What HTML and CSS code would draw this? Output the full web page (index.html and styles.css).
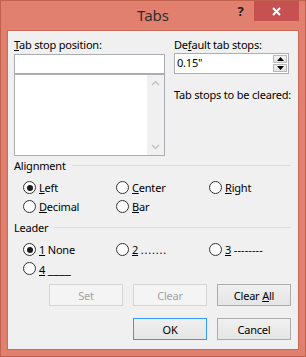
FILE: index.html
```html
<!DOCTYPE html>
<html lang="en">
<head>
    <meta charset="UTF-8">
    <title>Tabs</title>
    <link rel="stylesheet" href="styles.css">
</head>
<body>

<div class="window">
    <div class="titlebar">
        <span></span>
        <span class="title">Tabs</span>
        <div class="controls">
            <span class="help">?</span>
            <span class="close">
                <svg width="9" height="9" viewBox="0 0 9 9"><path d="M1 1L8 8M8 1L1 8" stroke="#fff" stroke-width="2" fill="none"/></svg>
            </span>
        </div>
    </div>

    <div class="client">
        <div class="top">
            <div class="col">
                <label class="lbl"><u>T</u>ab stop position:</label>
                <div class="textbox"></div>
                <div class="listbox">
                    <div class="list"></div>
                    <div class="vscroll">
                        <svg width="17" height="17" viewBox="0 0 17 17"><path d="M5 10L8.5 6.5L12 10" stroke="#c2c2c2" stroke-width="1.5" fill="none"/></svg>
                        <svg width="17" height="17" viewBox="0 0 17 17"><path d="M5 7L8.5 10.5L12 7" stroke="#c2c2c2" stroke-width="1.5" fill="none"/></svg>
                    </div>
                </div>
            </div>
            <div class="col">
                <label class="lbl">De<u>f</u>ault tab stops:</label>
                <div class="spin">
                    <span class="spin-val">0.15"</span>
                    <div class="spin-btns">
                        <span class="spin-btn"><svg width="7" height="4" viewBox="0 0 7 4"><path d="M0 4L3.5 0L7 4Z" fill="#000"/></svg></span>
                        <span class="spin-btn"><svg width="7" height="4" viewBox="0 0 7 4"><path d="M0 0L3.5 4L7 0Z" fill="#000"/></svg></span>
                    </div>
                </div>
                <div class="lbl cleared">Tab stops to be cleared:</div>
            </div>
        </div>

        <div class="group">
            <span>Alignment</span>
            <span class="rule"></span>
        </div>
        <div class="radios">
            <div class="radio checked"><span class="dot"></span><span><u>L</u>eft</span></div>
            <div class="radio"><span class="dot"></span><span><u>C</u>enter</span></div>
            <div class="radio"><span class="dot"></span><span><u>R</u>ight</span></div>
            <div class="radio"><span class="dot"></span><span><u>D</u>ecimal</span></div>
            <div class="radio"><span class="dot"></span><span><u>B</u>ar</span></div>
        </div>

        <div class="group leader">
            <span>Leader</span>
            <span class="rule"></span>
        </div>
        <div class="radios">
            <div class="radio checked"><span class="dot"></span><span><u>1</u> None</span></div>
            <div class="radio"><span class="dot"></span><span><u>2</u> <span class="dots">.......</span></span></div>
            <div class="radio"><span class="dot"></span><span><u>3</u> <span class="dashes">--------</span></span></div>
            <div class="radio"><span class="dot"></span><span><u>4</u> <span class="line">____</span></span></div>
        </div>

        <div class="buttons">
            <button class="btn" disabled>Set</button>
            <button class="btn" disabled>Clear</button>
            <button class="btn">Clear <u>A</u>ll</button>
        </div>
        <div class="buttons last">
            <button class="btn default">OK</button>
            <button class="btn">Cancel</button>
        </div>
    </div>
</div>

</body>
</html>
```

FILE: styles.css
```css
* {
    box-sizing: border-box;
}
body {
    margin: 0;
    font-family: "Noto Sans", sans-serif;
    font-size: 11px;
    letter-spacing: -0.2px;
    color: #000;
}
.window {
    width: 306px;
    height: 357px;
    background: #e2806f;
    border: 1px solid #c1624f;
    padding: 0 6px 6px;
    display: flex;
    flex-direction: column;
}
.titlebar {
    height: 29px;
    display: grid;
    grid-template-columns: 1fr auto 1fr;
}
.title {
    font-size: 15px;
    letter-spacing: 0;
    color: #2e2e2e;
    line-height: 20px;
    padding-top: 4px;
}
.controls {
    justify-self: end;
    display: flex;
    align-items: flex-start;
}
.help {
    width: 27px;
    height: 20px;
    text-align: center;
    font-weight: bold;
    font-size: 13px;
    line-height: 20px;
    color: #222;
}
.close {
    width: 45px;
    height: 20px;
    background: #c75050;
    display: flex;
    align-items: center;
    justify-content: center;
}
.client {
    flex: 1;
    background: #f0f0f0;
    border: 1px solid #c96b5a;
    padding: 6px 7px 0 6px;
}
.top {
    display: grid;
    grid-template-columns: 151px 115px;
    column-gap: 9px;
}
.lbl {
    display: block;
    line-height: 15px;
    height: 16px;
    white-space: nowrap;
}
.textbox {
    height: 20px;
    margin-top: 1px;
    background: #fff;
    border: 1px solid #abadb3;
}
.listbox {
    height: 82px;
    background: #fff;
    border: 1px solid #abadb3;
    display: flex;
}
.list {
    flex: 1;
}
.vscroll {
    width: 17px;
    background: #f0f0f0;
    display: flex;
    flex-direction: column;
    justify-content: space-between;
}
.spin {
    height: 21px;
    background: #fff;
    border: 1px solid #abadb3;
    display: flex;
    justify-content: space-between;
}
.spin-val {
    padding-left: 2px;
    line-height: 18px;
}
.spin-btns {
    width: 15px;
    display: flex;
    flex-direction: column;
    gap: 1px;
    padding: 1px 1px 1px 0;
}
.spin-btn {
    flex: 1;
    background: linear-gradient(#f2f2f2, #e2e2e2);
    border: 1px solid #b9b9b9;
    display: flex;
    align-items: center;
    justify-content: center;
}
.cleared {
    margin-top: 13px;
}
.group {
    display: flex;
    align-items: center;
    gap: 6px;
    margin-top: 2px;
    line-height: 15px;
}
.group .rule {
    flex: 1;
    height: 1px;
    background: #dcdcdc;
}
.group.leader {
    margin-top: 6px;
}
.radios {
    display: grid;
    grid-template-columns: 93px 93px 93px;
    row-gap: 4px;
    margin: 7px 0 0 9px;
}
.radio {
    display: flex;
    align-items: center;
    gap: 3px;
    height: 15px;
    white-space: nowrap;
}
.dots {
    letter-spacing: 0.8px;
}
.dashes {
    letter-spacing: 0.1px;
}
.line {
    letter-spacing: 0;
    font-size: 13px;
}
.dot {
    width: 13px;
    height: 13px;
    border: 1px solid #333;
    border-radius: 50%;
    background: #fff;
    display: flex;
    align-items: center;
    justify-content: center;
}
.checked .dot::after {
    content: "";
    width: 6px;
    height: 6px;
    border-radius: 50%;
    background: #1a1a1a;
}
.buttons {
    display: flex;
    justify-content: flex-end;
    gap: 10px;
    margin-top: 8px;
}
.buttons.last {
    margin-top: 12px;
}
.btn {
    width: 74px;
    height: 22px;
    font-family: inherit;
    font-size: 11px;
    letter-spacing: -0.2px;
    color: #000;
    border: 1px solid #acacac;
    background: linear-gradient(#f0f0f0, #e5e5e5);
    padding: 0;
}
.btn:disabled {
    color: #a3a3a3;
    border-color: #d5d5d5;
    background: #f4f4f4;
}
.btn.default {
    border-color: #3399ff;
}
```
